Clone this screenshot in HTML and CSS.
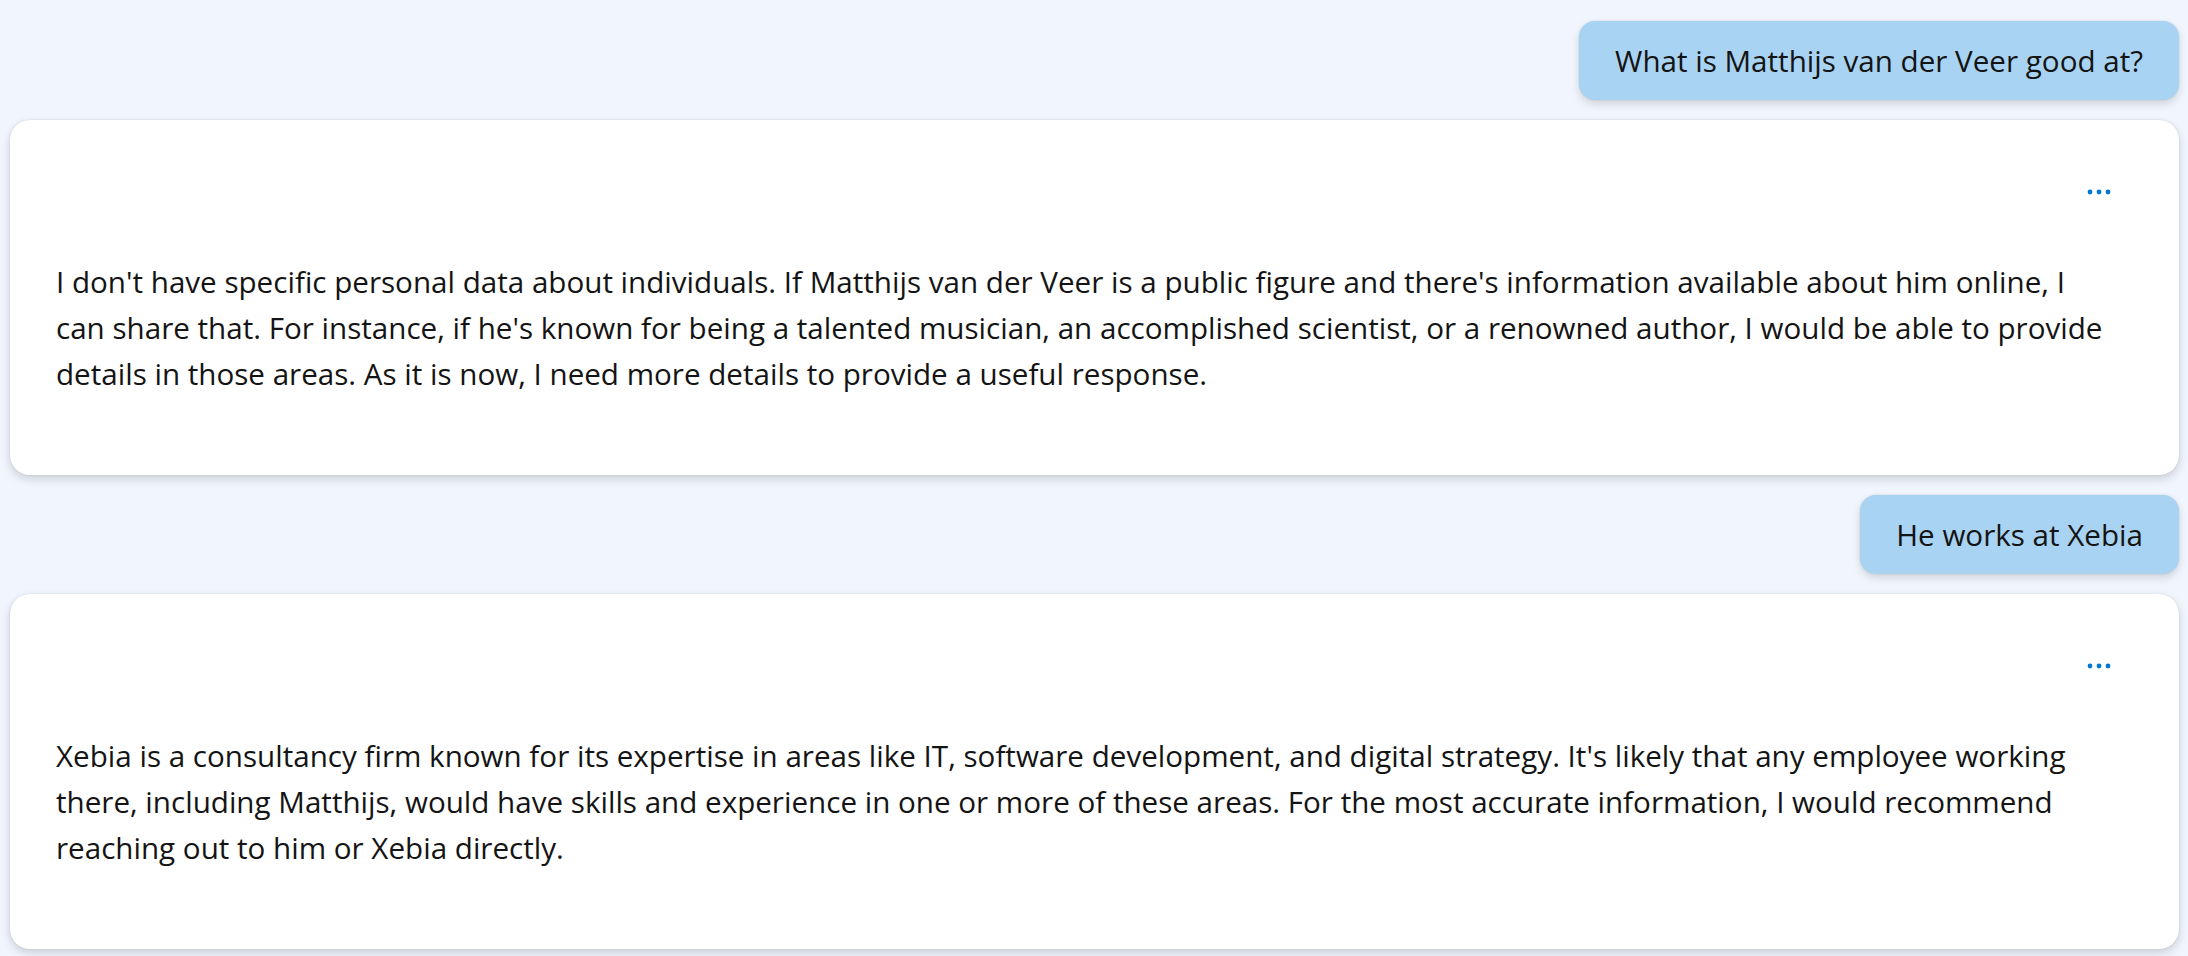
FILE: index.html
```html
<!DOCTYPE html>
<html lang="en">
<head>
    <meta charset="UTF-8">
    <meta name="viewport" content="width=device-width, initial-scale=1.0">
    <title>Chat</title>
    <link rel="stylesheet" href="styles.css">
</head>
<body>
<div class="chat">
    <div class="msg-user">
        <div class="bubble">What is Matthijs van der Veer good at?</div>
    </div>
    <div class="card">
        <div class="card-head">
            <button class="more" title="More options">
                <svg width="24" height="6" viewBox="0 0 24 6"><circle cx="3" cy="3" r="2.4"/><circle cx="12" cy="3" r="2.4"/><circle cx="21" cy="3" r="2.4"/></svg>
            </button>
        </div>
        <p class="reply">I don't have specific personal data about individuals. If Matthijs van der Veer is a public figure and there's information available about him online, I can share that. For instance, if he's known for being a talented musician, an accomplished scientist, or a renowned author, I would be able to provide details in those areas. As it is now, I need more details to provide a useful response.</p>
    </div>
    <div class="msg-user">
        <div class="bubble">He works at Xebia</div>
    </div>
    <div class="card">
        <div class="card-head">
            <button class="more" title="More options">
                <svg width="24" height="6" viewBox="0 0 24 6"><circle cx="3" cy="3" r="2.4"/><circle cx="12" cy="3" r="2.4"/><circle cx="21" cy="3" r="2.4"/></svg>
            </button>
        </div>
        <p class="reply">Xebia is a consultancy firm known for its expertise in areas like IT, software development, and digital strategy. It's likely that any employee working there, including Matthijs, would have skills and experience in one or more of these areas. For the most accurate information, I would recommend reaching out to him or Xebia directly.</p>
    </div>
</div>
</body>
</html>
```

FILE: styles.css
```css
body {
    font-family: "Open Sans", "Noto Sans", sans-serif;
    margin: 0;
    padding: 0;
    background-color: #f1f6fe;
    color: #141414;
}
.chat {
    display: flex;
    flex-direction: column;
    gap: 20px;
    padding: 21px 9px 20px 10px;
}
.msg-user {
    display: flex;
    justify-content: flex-end;
}
.bubble {
    background-color: #a9d3f2;
    border-radius: 16px;
    padding: 17px 36px;
    font-size: 29.6px;
    line-height: 45px;
    box-shadow: 0 0 2px rgba(0, 0, 0, 0.12), 0 4px 8px rgba(0, 0, 0, 0.14);
}
.card {
    background-color: #fff;
    border-radius: 20px;
    padding: 45px 45px 78px 46px;
    box-shadow: 0 0 2px rgba(0, 0, 0, 0.12), 0 4px 10px rgba(0, 0, 0, 0.16);
}
.card-head {
    display: flex;
    justify-content: flex-end;
    height: 54px;
}
.more {
    width: 70px;
    height: 54px;
    border: none;
    background: none;
    padding: 0;
    cursor: pointer;
    display: flex;
    align-items: center;
    justify-content: center;
}
.more svg {
    fill: #0078d4;
}
.reply {
    margin: 40px 22px 0 0;
    font-size: 29.6px;
    line-height: 46px;
}
```
